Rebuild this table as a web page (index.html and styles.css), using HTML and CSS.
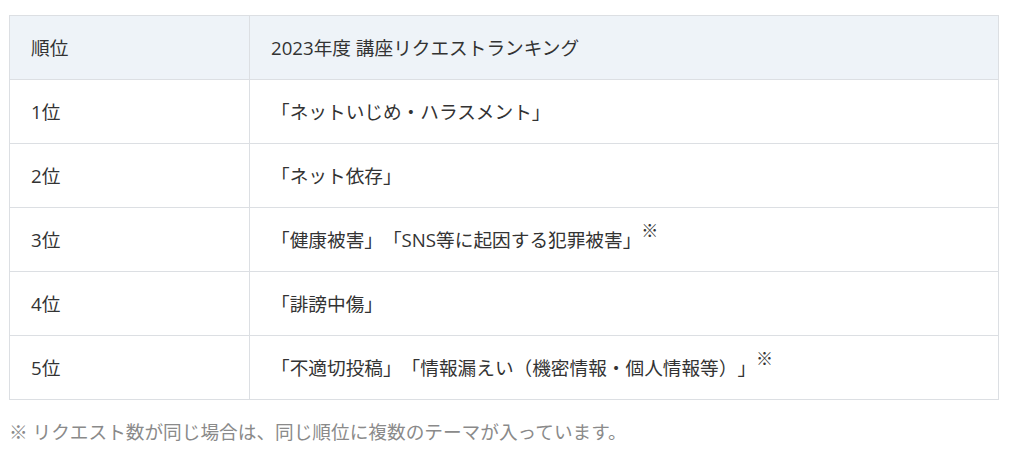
FILE: index.html
```html
<!DOCTYPE html>
<html lang="ja">
<head>
<meta charset="utf-8">
<link rel="stylesheet" href="styles.css">
</head>
<body>
<div class="wrap">
  <table class="rank">
    <thead>
      <tr><th class="c1">順位</th><th>2023年度 講座リクエストランキング</th></tr>
    </thead>
    <tbody>
      <tr><td class="c1">1位</td><td>「ネットいじめ・ハラスメント」</td></tr>
      <tr><td class="c1">2位</td><td>「ネット依存」</td></tr>
      <tr><td class="c1">3位</td><td>「健康被害」「SNS等に起因する犯罪被害」<sup>※</sup></td></tr>
      <tr><td class="c1">4位</td><td>「誹謗中傷」</td></tr>
      <tr><td class="c1">5位</td><td>「不適切投稿」「情報漏えい（機密情報・個人情報等）」<sup>※</sup></td></tr>
    </tbody>
  </table>
  <p class="note">※ リクエスト数が同じ場合は、同じ順位に複数のテーマが入っています。</p>
</div>
</body>
</html>
```
FILE: styles.css
```css
html, body {
  margin: 0;
  padding: 0;
  background: #fff;
}
body {
  font-family: "Open Sans", "Noto Sans CJK JP", sans-serif;
  font-size: 18.67px;
  color: #333;
  text-spacing-trim: space-all;
}
.wrap {
  padding: 15px 12px 0 9px;
}
.rank {
  width: 990px;
  border-collapse: collapse;
  table-layout: fixed;
}
.rank th, .rank td {
  border: 1px solid #dcdfe3;
  padding: 20px 21px;
  line-height: 23px;
  height: 23px;
  text-align: left;
  font-weight: normal;
  vertical-align: middle;
}
.rank th {
  background: #eef3f8;
}
.rank .c1 {
  width: 197px;
}
.rank sup {
  font-family: "Noto Sans CJK JP", sans-serif;
  font-size: 17px;
  line-height: 0;
  vertical-align: 10px;
}
.note {
  margin: 20px 0 0;
  color: #8a8a8a;
  line-height: 24px;
}
```
